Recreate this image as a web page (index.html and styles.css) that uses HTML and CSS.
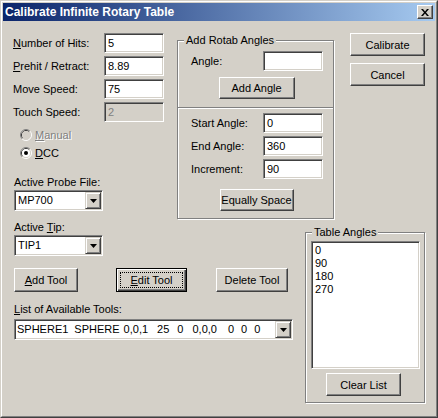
FILE: index.html
```html
<!DOCTYPE html>
<html>
<head>
<meta charset="utf-8">
<link rel="stylesheet" href="styles.css">
</head>
<body>
<div class="window">
 <div class="window-inner">
  <div class="titlebar">
   <span class="title">Calibrate Infinite Rotary Table</span>
   <div class="close"><svg width="8" height="7" viewBox="0 0 8 7"><path d="M0 0h2l2 2.5 2-2.5h2l-3 3.5 3 3.5h-2l-2-2.5-2 2.5h-2l3-3.5z" fill="#000"/></svg></div>
  </div>
  <div class="client">
   <div class="left">
    <div class="field"><span class="lbl"><u>N</u>umber of Hits:</span><div class="edit">5</div></div>
    <div class="field"><span class="lbl"><u>P</u>rehit / Retract:</span><div class="edit">8.89</div></div>
    <div class="field"><span class="lbl">Move Speed:</span><div class="edit">75</div></div>
    <div class="field"><span class="lbl">Touch Speed:</span><div class="edit disabled">2</div></div>
    <div class="radios">
     <div class="radio radio-disabled">
      <svg width="12" height="12" viewBox="0 0 12 12"><path d="M2.11 9.89A5.5 5.5 0 0 1 9.89 2.11" fill="none" stroke="#808080"/><path d="M9.89 2.11A5.5 5.5 0 0 1 2.11 9.89" fill="none" stroke="#fff"/><path d="M2.82 9.18A4.5 4.5 0 0 1 9.18 2.82" fill="none" stroke="#404040"/><path d="M9.18 2.82A4.5 4.5 0 0 1 2.82 9.18" fill="none" stroke="#d4d0c8"/><circle cx="6" cy="6" r="4" fill="#d4d0c8"/></svg>
      <span class="radio-text dis"><u>M</u>anual</span>
     </div>
     <div class="radio">
      <svg width="12" height="12" viewBox="0 0 12 12"><path d="M2.11 9.89A5.5 5.5 0 0 1 9.89 2.11" fill="none" stroke="#808080"/><path d="M9.89 2.11A5.5 5.5 0 0 1 2.11 9.89" fill="none" stroke="#fff"/><path d="M2.82 9.18A4.5 4.5 0 0 1 9.18 2.82" fill="none" stroke="#404040"/><path d="M9.18 2.82A4.5 4.5 0 0 1 2.82 9.18" fill="none" stroke="#d4d0c8"/><circle cx="6" cy="6" r="4" fill="#fff"/><circle cx="6" cy="6" r="2" fill="#000"/></svg>
      <span class="radio-text"><u>D</u>CC</span>
     </div>
    </div>
    <div class="combo-label">Active Probe File:</div>
    <div class="combo combo-small"><span class="combo-text">MP700</span><span class="drop"><svg width="7" height="4" viewBox="0 0 7 4"><path d="M0 0h7l-3.5 4z" fill="#000"/></svg></span></div>
    <div class="combo-label tip-label">Active <u>T</u>ip:</div>
    <div class="combo combo-small"><span class="combo-text">TIP1</span><span class="drop"><svg width="7" height="4" viewBox="0 0 7 4"><path d="M0 0h7l-3.5 4z" fill="#000"/></svg></span></div>
   </div>

   <div class="rotab group">
    <span class="group-label">Add Rotab Angles</span>
    <div class="gfield angle-row"><span class="glbl">Angle:</span><div class="edit"></div></div>
    <div class="btn add-angle">Add Angle</div>
    <div class="divider"></div>
    <div class="gfield start-row"><span class="glbl">Start Angle:</span><div class="edit">0</div></div>
    <div class="gfield"><span class="glbl">End Angle:</span><div class="edit">360</div></div>
    <div class="gfield"><span class="glbl">Increment:</span><div class="edit">90</div></div>
    <div class="btn equally">Equally Space</div>
   </div>

   <div class="btns">
    <div class="btn std">Calibrate</div>
    <div class="btn std">Cancel</div>
   </div>

   <div class="angles group">
    <span class="group-label">Table Angles</span>
    <div class="listbox">
     <div class="item">0</div>
     <div class="item">90</div>
     <div class="item">180</div>
     <div class="item">270</div>
    </div>
    <div class="btn std clear">Clear List</div>
   </div>

   <div class="tools">
    <div class="tool-buttons">
     <div class="btn add-tool"><u>A</u>dd Tool</div>
     <div class="btn default edit-tool"><span class="focus"><u>E</u>dit Tool</span></div>
     <div class="btn delete-tool">Delete Tool</div>
    </div>
    <div class="list-label"><u>L</u>ist of Available Tools:</div>
    <div class="combo combo-wide"><span class="combo-text tools-text"><span class="col c1">SPHERE1</span><span class="col c2">SPHERE</span><span class="col c3">0,0,1</span><span class="col c4">25</span><span class="col c5">0</span><span class="col c6">0,0,0</span><span class="col c7">0</span><span class="col c8">0</span><span class="col c9">0</span></span><span class="drop"><svg width="7" height="4" viewBox="0 0 7 4"><path d="M0 0h7l-3.5 4z" fill="#000"/></svg></span></div>
   </div>
  </div>
 </div>
</div>
</body>
</html>
```
FILE: styles.css
```css
* { box-sizing: border-box; }
body {
  margin: 0;
  background: #d4d0c8;
  font-family: "Liberation Sans", Arial, sans-serif;
  font-size: 11px;
  color: #000;
}
u { text-decoration: underline; text-underline-offset: 1px; }

.window {
  width: 438px;
  height: 418px;
  border: 1px solid;
  border-color: #d4d0c8 #404040 #404040 #d4d0c8;
  background: #d4d0c8;
}
.window-inner {
  height: 100%;
  border: 1px solid;
  border-color: #fff #808080 #808080 #fff;
  padding: 1px;
  display: flex;
  flex-direction: column;
}
.titlebar {
  height: 18px;
  flex: none;
  background: linear-gradient(to right, #0a246a, #a6caf0);
  display: flex;
  align-items: center;
  padding: 0 2px 0 2px;
}
.title {
  flex: 1;
  color: #fff;
  font-weight: bold;
  font-size: 12px;
  white-space: nowrap;
}
.close {
  width: 16px;
  height: 14px;
  background: #d4d0c8;
  border: 1px solid;
  border-color: #fff #404040 #404040 #fff;
  box-shadow: inset -1px -1px 0 #808080;
  display: flex;
  align-items: center;
  justify-content: center;
  padding-right: 1px;
}

.client {
  flex: 1;
  padding: 12px 0 0 10px;
  display: grid;
  grid-template-columns: 164px 115px 13px 29px 16px 75px;
  grid-template-rows: 192px 41px auto;
  grid-template-areas:
    "left rotab rotab rotab . btns"
    "left . . angles angles angles"
    "tools tools . angles angles angles";
  align-items: start;
}

/* edit boxes */
.edit {
  width: 60px;
  height: 20px;
  background: #fff;
  border: 1px solid;
  border-color: #808080 #fff #fff #808080;
  box-shadow: inset 1px 1px 0 #404040, inset -1px -1px 0 #d4d0c8;
  padding: 0 0 0 3px;
  line-height: 18px;
  white-space: nowrap;
}
.edit.disabled {
  background: #d4d0c8;
  color: #808080;
}

/* buttons */
.btn {
  background: #d4d0c8;
  border: 1px solid;
  border-color: #fff #404040 #404040 #fff;
  box-shadow: inset -1px -1px 0 #808080;
  display: flex;
  align-items: center;
  justify-content: center;
  white-space: nowrap;
}
.btn.std { width: 75px; height: 23px; }

/* left column */
.left { grid-area: left; }
.field {
  display: flex;
  height: 20px;
  margin-bottom: 3px;
}
.lbl {
  width: 91px;
  line-height: 20px;
  white-space: nowrap;
}
.radios { margin-top: 4px; }
.radio {
  height: 18px;
  display: flex;
  align-items: center;
  padding-left: 7px;
}
.radio svg { display: block; }
.radio-text { margin-left: 3px; }
.radio-text.dis { color: #808080; text-shadow: 1px 1px 0 #fff; }

.combo-label {
  line-height: 13px;
  margin-top: 14px;
  margin-bottom: 1px;
  padding-left: 1px;
  white-space: nowrap;
}
.tip-label { margin-top: 10px; }
.combo {
  height: 21px;
  background: #fff;
  border: 1px solid;
  border-color: #808080 #fff #fff #808080;
  box-shadow: inset 1px 1px 0 #404040, inset -1px -1px 0 #d4d0c8;
  padding: 1px;
  display: flex;
  align-items: stretch;
  margin-left: 1px;
}
.combo-small { width: 89px; }
.combo-wide { width: 279px; }
.combo-text {
  flex: 1;
  padding-left: 2px;
  line-height: 17px;
  white-space: nowrap;
  overflow: hidden;
}
.tools-text { padding-left: 1px; display: flex; }
.col { flex: none; }
.c2 { margin-left: 6px; }
.c3 { margin-left: 4px; }
.c4 { margin-left: 9px; }
.c5 { margin-left: 8px; }
.c6 { margin-left: 9px; }
.c7 { margin-left: 11px; }
.c8 { margin-left: 7px; }
.c9 { margin-left: 7px; }
.drop {
  width: 16px;
  flex: none;
  background: #d4d0c8;
  border: 1px solid;
  border-color: #d4d0c8 #404040 #404040 #d4d0c8;
  box-shadow: inset 1px 1px 0 #fff, inset -1px -1px 0 #808080;
  display: flex;
  align-items: center;
  justify-content: center;
}
.drop svg { display: block; }

/* groups */
.group {
  position: relative;
  border: 1px solid #808080;
  box-shadow: inset 1px 1px 0 #fff, 1px 1px 0 #fff;
}
.group-label {
  position: absolute;
  top: -7px;
  left: 6px;
  padding: 0 2px;
  line-height: 13px;
  background: #d4d0c8;
  white-space: nowrap;
}
.rotab {
  grid-area: rotab;
  margin-top: 7px;
  height: 179px;
  padding: 10px 0 0 0;
  display: flex;
  flex-direction: column;
  align-items: center;
}
.gfield {
  display: flex;
  height: 20px;
  width: 100%;
  padding-left: 13px;
  margin-bottom: 3px;
}
.glbl {
  width: 72px;
  line-height: 20px;
  white-space: nowrap;
}
.add-angle {
  width: 76px;
  height: 22px;
  margin-top: 3px;
  margin-left: 2px;
}
.divider {
  align-self: stretch;
  height: 2px;
  margin-top: 8px;
  border-top: 1px solid #808080;
  border-bottom: 1px solid #fff;
}
.start-row { margin-top: 4px; }
.equally {
  width: 74px;
  height: 22px;
  margin-top: 7px;
  margin-left: 2px;
}

.btns {
  grid-area: btns;
  display: flex;
  flex-direction: column;
  gap: 7px;
}

.angles {
  grid-area: angles;
  margin-top: 7px;
  height: 171px;
  padding: 8px 0 0 5px;
}
.listbox {
  width: 109px;
  height: 128px;
  background: #fff;
  border: 1px solid;
  border-color: #808080 #fff #fff #808080;
  box-shadow: inset 1px 1px 0 #404040, inset -1px -1px 0 #d4d0c8;
  padding: 2px 0 0 3px;
}
.item { line-height: 13px; color: #000; }
.clear {
  margin-top: 4px;
  margin-left: 15px;
}

.tools { grid-area: tools; padding-left: 1px; }
.tool-buttons {
  display: flex;
  margin-top: 2px;
  height: 24px;
}
.add-tool { width: 64px; height: 24px; }
.edit-tool {
  width: 71px;
  height: 24px;
  margin-left: 38px;
}
.delete-tool {
  width: 72px;
  height: 24px;
  margin-left: 29px;
}
.btn.default {
  border: 1px solid #000;
  box-shadow: inset 1px 1px 0 #fff, inset -1px -1px 0 #404040, inset -2px -2px 0 #808080;
  padding: 3px;
}
.focus {
  flex: 1;
  align-self: stretch;
  border: 1px dotted #000;
  display: flex;
  align-items: center;
  justify-content: center;
}
.list-label {
  margin-top: 11px;
  line-height: 13px;
  white-space: nowrap;
}
.combo-wide { margin-top: 3px; margin-left: 0; }
```
